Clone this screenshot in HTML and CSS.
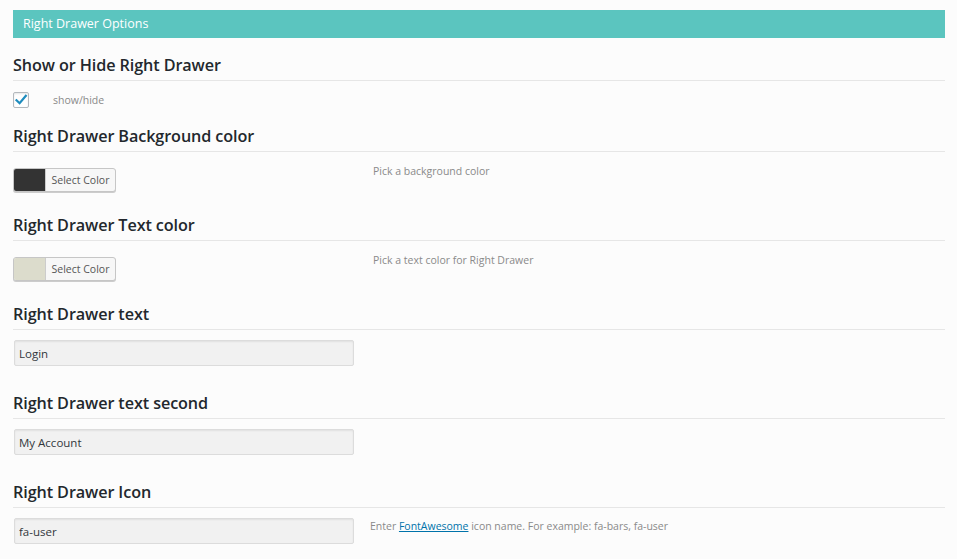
FILE: index.html
```html
<!DOCTYPE html>
<html>
<head>
<meta charset="utf-8">
<link rel="stylesheet" href="styles.css">
</head>
<body>
<div class="page">
  <div class="bar">Right Drawer Options</div>

  <section class="sec">
    <h3 class="title">Show or Hide Right Drawer</h3>
    <div class="row row-check">
      <span class="check">
        <svg width="14" height="14" viewBox="0 0 14 14"><path d="M2.5 7.2 L5.6 10.2 L11.8 2.8" fill="none" stroke="#1e8cbe" stroke-width="2.2" stroke-linecap="square"/></svg>
      </span>
      <span class="check-label">show/hide</span>
    </div>
  </section>

  <section class="sec">
    <h3 class="title">Right Drawer Background color</h3>
    <div class="row row-color">
      <div class="field">
        <button class="picker"><span class="swatch swatch-dark"></span><span class="picker-text">Select Color</span></button>
      </div>
      <div class="desc">Pick a background color</div>
    </div>
  </section>

  <section class="sec">
    <h3 class="title">Right Drawer Text color</h3>
    <div class="row row-color">
      <div class="field">
        <button class="picker"><span class="swatch swatch-light"></span><span class="picker-text">Select Color</span></button>
      </div>
      <div class="desc">Pick a text color for Right Drawer</div>
    </div>
  </section>

  <section class="sec">
    <h3 class="title">Right Drawer text</h3>
    <div class="row row-input">
      <div class="field"><input class="text" type="text" value="Login"></div>
    </div>
  </section>

  <section class="sec">
    <h3 class="title">Right Drawer text second</h3>
    <div class="row row-input">
      <div class="field"><input class="text" type="text" value="My Account"></div>
    </div>
  </section>

  <section class="sec">
    <h3 class="title">Right Drawer Icon</h3>
    <div class="row row-input">
      <div class="field"><input class="text" type="text" value="fa-user"></div>
      <div class="desc desc-icon">Enter <a href="#">FontAwesome</a> icon name. For example: fa-bars, fa-user</div>
    </div>
  </section>
</div>
</body>
</html>
```
FILE: styles.css
```css
html, body {
  margin: 0;
  padding: 0;
  background: #fcfcfc;
}
body {
  font-family: "Open Sans", "Noto Sans", sans-serif;
  color: #23282d;
}
.page {
  padding: 10px 12px 0 13px;
}
.bar {
  background: #5bc5bf;
  color: #fff;
  height: 28px;
  line-height: 28px;
  padding-left: 10px;
  font-size: 12.5px;
}
.bar + .sec {
  margin-top: 14px;
}
.title {
  margin: 0;
  font-size: 16.2px;
  font-weight: 600;
  line-height: 24px;
  padding: 1px 0 3px;
  border-bottom: 1px solid #e6e6e6;
  color: #23282d;
  letter-spacing: -0.1px;
}
.row {
  display: flex;
  align-items: flex-start;
}
.row-check {
  padding: 11px 0 15px;
  align-items: center;
  height: 16px;
  box-sizing: content-box;
}
.check {
  width: 14px;
  height: 14px;
  border: 1px solid #b4b9be;
  border-radius: 2px;
  background: #fff;
  box-shadow: inset 0 1px 2px rgba(0,0,0,0.1);
  display: flex;
  align-items: center;
  justify-content: center;
}
.check-label {
  margin-left: 24px;
  font-size: 10.5px;
  color: #8a8a8a;
}
.row-color {
  padding: 16px 0 20px;
}
.row-input {
  padding: 10px 0 24px;
}
.field {
  width: 357px;
  flex: none;
}
.picker {
  display: flex;
  align-items: stretch;
  height: 24px;
  width: 103px;
  padding: 0;
  margin: 0;
  border: 1px solid #c6c6c6;
  border-radius: 3px;
  background: #f7f7f7;
  box-shadow: 0 1px 0 #ccc;
  overflow: hidden;
  font-family: inherit;
  cursor: pointer;
}
.swatch {
  width: 31px;
  flex: none;
  border-right: 1px solid #ccc;
}
.swatch-dark { background: #333333; }
.swatch-light { background: #dcdccc; }
.picker-text {
  flex: 1;
  font-size: 10.5px;
  line-height: 22px;
  color: #555;
  text-align: center;
}
.desc {
  font-size: 10.5px;
  color: #8a8a8a;
  line-height: 14px;
  margin-left: 3px;
  margin-top: -4px;
}
.desc-icon {
  margin-left: 0;
  margin-top: 1px;
}
.desc a {
  color: #0073aa;
  text-decoration: underline;
}
.text {
  display: block;
  box-sizing: border-box;
  width: 340px;
  height: 26px;
  margin: 0 0 0 1px;
  padding: 0 4px;
  border: 1px solid #dcdcdc;
  border-radius: 2px;
  background: #f1f1f1;
  box-shadow: inset 0 1px 2px rgba(0,0,0,0.07);
  font-family: inherit;
  font-size: 11.5px;
  color: #32373c;
}
```
